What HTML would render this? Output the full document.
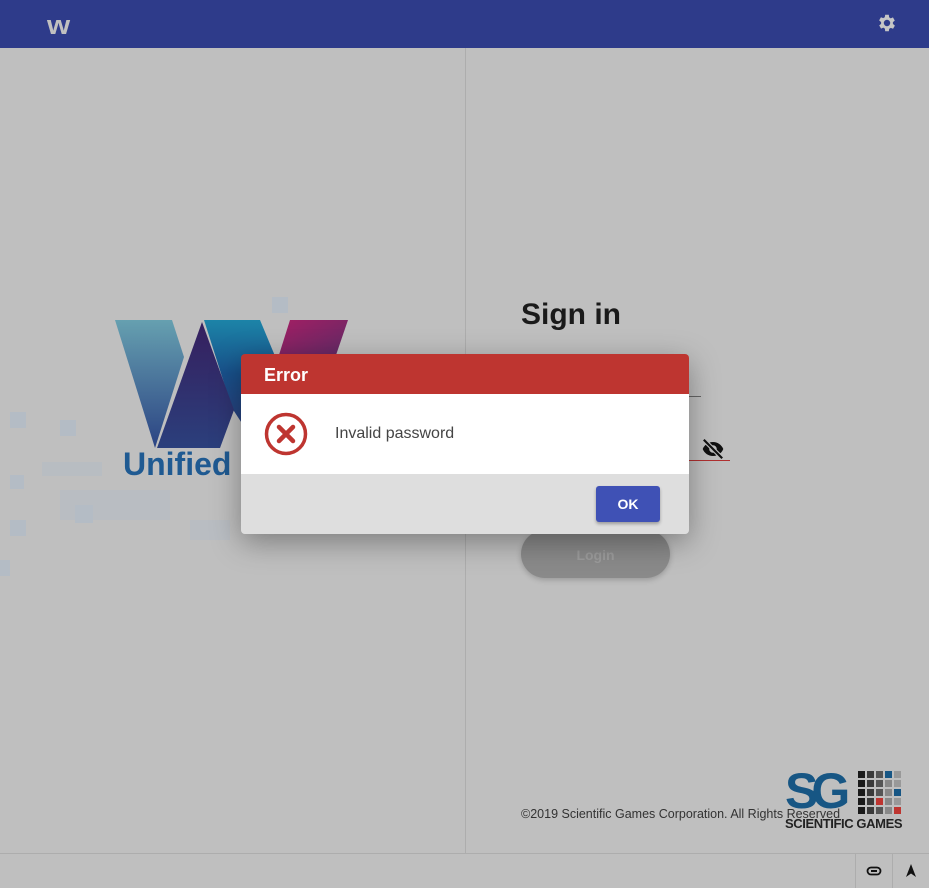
<!DOCTYPE html>
<html><head><meta charset="utf-8"><style>
body{margin:0;width:929px;height:888px;background:#bfbfbf;position:relative;overflow:hidden;font-family:"Liberation Sans",sans-serif}
.hdr{position:absolute;left:0;top:0;width:929px;height:48px;background:#2e3b8a}
.vl{position:absolute;left:465px;top:48px;width:1px;height:805px;background:#adadad}
.bl{position:absolute;left:0;top:853px;width:929px;height:1px;background:#adadad}
.sq{position:absolute;background:#b4bcc5}
</style></head><body>
<div class="hdr">
<div style="position:absolute;left:47px;top:10px;font:900 27px 'Liberation Sans';color:#c0c0c0;transform:scaleX(1.1);transform-origin:left">w</div>
<svg style="position:absolute;left:876px;top:12px" width="22" height="22" viewBox="0 0 24 24"><path fill="#c6c6c6" d="M19.4 13a7.5 7.5 0 000-2l2.1-1.6-2-3.5-2.5 1a7 7 0 00-1.7-1L15 3h-4l-.4 2.7a7 7 0 00-1.7 1l-2.5-1-2 3.5L6.6 11a7.5 7.5 0 000 2l-2.1 1.6 2 3.5 2.5-1a7 7 0 001.7 1L11 21h4l.4-2.7a7 7 0 001.7-1l2.5 1 2-3.5zM13 15.5a3.5 3.5 0 110-7 3.5 3.5 0 010 7z" transform="translate(-1 0)"/></svg>
</div>
<div class="vl"></div><div class="bl"></div>
<div class="sq" style="left:10px;top:412px;width:16px;height:16px"></div>
<div class="sq" style="left:60px;top:420px;width:16px;height:16px"></div>
<div class="sq" style="left:10px;top:475px;width:14px;height:14px"></div>
<div class="sq" style="left:42px;top:462px;width:60px;height:14px;opacity:.6"></div>
<div class="sq" style="left:60px;top:490px;width:110px;height:30px;opacity:.5"></div>
<div class="sq" style="left:10px;top:520px;width:16px;height:16px"></div>
<div class="sq" style="left:190px;top:520px;width:40px;height:20px;opacity:.5"></div>
<div class="sq" style="left:75px;top:505px;width:18px;height:18px"></div>
<div class="sq" style="left:272px;top:297px;width:16px;height:16px"></div>
<div class="sq" style="left:0px;top:560px;width:10px;height:16px"></div>
<svg style="position:absolute;left:110px;top:318px" width="240" height="135" viewBox="0 0 240 135">
<defs>
<linearGradient id="a" x1="0" y1="0" x2="0" y2="1"><stop offset="0" stop-color="#66a0b0"/><stop offset="1" stop-color="#2b4383"/></linearGradient>
<linearGradient id="b" x1="0" y1="0" x2="0" y2="1"><stop offset="0" stop-color="#1c84a8"/><stop offset=".5" stop-color="#18508a"/><stop offset="1" stop-color="#2b3f7c"/></linearGradient>
<linearGradient id="c" x1="0" y1="0" x2="1" y2="1"><stop offset="0" stop-color="#a31e63"/><stop offset="1" stop-color="#5d2b66"/></linearGradient>
<linearGradient id="d" x1="0" y1="0" x2="0" y2="1"><stop offset="0" stop-color="#361f5e"/><stop offset="1" stop-color="#2b3f7c"/></linearGradient>
</defs>
<polygon points="5,2 62,2 74,39 45,130" fill="url(#a)"/>
<polygon points="94,2 150,2 170,50 135,110 122,90" fill="url(#b)"/>
<polygon points="92,4 47,130 110,130 124,92" fill="url(#d)"/>
<polygon points="180,2 238,2 225,40 168,40" fill="url(#c)"/>
</svg>
<div style="position:absolute;left:123px;top:446px;font:bold 32px 'Liberation Sans',sans-serif;color:#1f5a92">Unified</div>
<div style="position:absolute;left:521px;top:298px;font:bold 30px 'Liberation Sans',sans-serif;color:#1a1a1a">Sign in</div>
<div style="position:absolute;left:689px;top:396px;width:12px;height:1px;background:#666"></div>
<div style="position:absolute;left:689px;top:460px;width:41px;height:1px;background:#b03030"></div>
<svg style="position:absolute;left:700px;top:436px" width="26" height="26" viewBox="0 0 24 24"><path fill="#111" d="M12 5.5c4.3 0 8 2.7 9.5 6.5-1.5 3.8-5.2 6.5-9.5 6.5S4 15.8 2.5 12C4 8.2 7.7 5.5 12 5.5zm0 3a3.5 3.5 0 100 7 3.5 3.5 0 000-7z"/><path d="M3.5 3.5l17 17" stroke="#bfbfbf" stroke-width="4"/><path d="M3.5 3.5l17 17" stroke="#111" stroke-width="2"/></svg>
<div style="position:absolute;left:521px;top:530px;width:149px;height:48px;border-radius:24px;background:#8a8a8a;box-shadow:0 2px 6px rgba(0,0,0,.2);color:#9c9c9c;font:bold 14px 'Liberation Sans';text-align:center;line-height:50px">Login</div>
<div style="position:absolute;left:521px;top:807px;font:12.5px 'Liberation Sans',sans-serif;color:#333">©2019 Scientific Games Corporation. All Rights Reserved</div>
<div style="position:absolute;left:785px;top:766px;font:bold 50px 'Liberation Sans';color:#175684;letter-spacing:-7px;line-height:50px">SG</div>
<svg style="position:absolute;left:858px;top:771px" width="45" height="45"><g>
<rect x="0" y="0" width="7" height="7" fill="#1a1a1a"/><rect x="9" y="0" width="7" height="7" fill="#3a3a3a"/><rect x="18" y="0" width="7" height="7" fill="#555"/><rect x="27" y="0" width="7" height="7" fill="#175684"/><rect x="36" y="0" width="7" height="7" fill="#999"/>
<rect x="0" y="9" width="7" height="7" fill="#1a1a1a"/><rect x="9" y="9" width="7" height="7" fill="#3a3a3a"/><rect x="18" y="9" width="7" height="7" fill="#555"/><rect x="27" y="9" width="7" height="7" fill="#888"/><rect x="36" y="9" width="7" height="7" fill="#999"/>
<rect x="0" y="18" width="7" height="7" fill="#1a1a1a"/><rect x="9" y="18" width="7" height="7" fill="#3a3a3a"/><rect x="18" y="18" width="7" height="7" fill="#555"/><rect x="27" y="18" width="7" height="7" fill="#888"/><rect x="36" y="18" width="7" height="7" fill="#175684"/>
<rect x="0" y="27" width="7" height="7" fill="#1a1a1a"/><rect x="9" y="27" width="7" height="7" fill="#3a3a3a"/><rect x="18" y="27" width="7" height="7" fill="#be3530"/><rect x="27" y="27" width="7" height="7" fill="#888"/><rect x="36" y="27" width="7" height="7" fill="#999"/>
<rect x="0" y="36" width="7" height="7" fill="#1a1a1a"/><rect x="9" y="36" width="7" height="7" fill="#3a3a3a"/><rect x="18" y="36" width="7" height="7" fill="#555"/><rect x="27" y="36" width="7" height="7" fill="#888"/><rect x="36" y="36" width="7" height="7" fill="#be3530"/></g></svg>
<div style="position:absolute;left:785px;top:816px;font:bold 13px 'Liberation Sans';color:#222;letter-spacing:-.4px">SCIENTIFIC GAMES</div>
<div style="position:absolute;left:855px;top:854px;width:1px;height:34px;background:#adadad"></div>
<div style="position:absolute;left:892px;top:854px;width:1px;height:34px;background:#adadad"></div>
<svg style="position:absolute;left:866px;top:865px" width="16" height="12" viewBox="0 0 16 12"><rect x="1.5" y="2.5" width="13" height="7" rx="3.5" fill="none" stroke="#111" stroke-width="1.8"/><rect x="5" y="5" width="6" height="2" fill="#111"/></svg>
<svg style="position:absolute;left:905px;top:863px" width="12" height="15" viewBox="0 0 12 15"><path d="M6 1L11 14 6 10.5 1 14z" fill="#111"/></svg>
<div style="position:absolute;left:241px;top:354px;width:448px;height:180px;border-radius:4px;overflow:hidden;box-shadow:0 8px 30px rgba(0,0,0,.35)">
<div style="height:40px;background:#be3530;color:#fff;font:bold 18px 'Liberation Sans';line-height:42px;padding-left:23px">Error</div>
<div style="height:80px;background:#fff;position:relative">
<svg style="position:absolute;left:23px;top:18px" width="44" height="44" viewBox="0 0 44 44"><circle cx="22" cy="22" r="19.5" fill="none" stroke="#be3530" stroke-width="3.5"/><path d="M15 15l14 14M29 15L15 29" stroke="#be3530" stroke-width="4.5" stroke-linecap="round"/></svg>
<div style="position:absolute;left:94px;top:31px;font:16px 'Liberation Sans',sans-serif;color:#444">Invalid password</div>
</div>
<div style="height:60px;background:#dedede;position:relative">
<div style="position:absolute;left:355px;top:12px;width:64px;height:36px;border-radius:3px;background:#3f51b5;color:#fff;font:bold 14px 'Liberation Sans';text-align:center;line-height:36px;box-shadow:0 2px 3px rgba(0,0,0,.3)">OK</div>
</div></div>
</body></html>
